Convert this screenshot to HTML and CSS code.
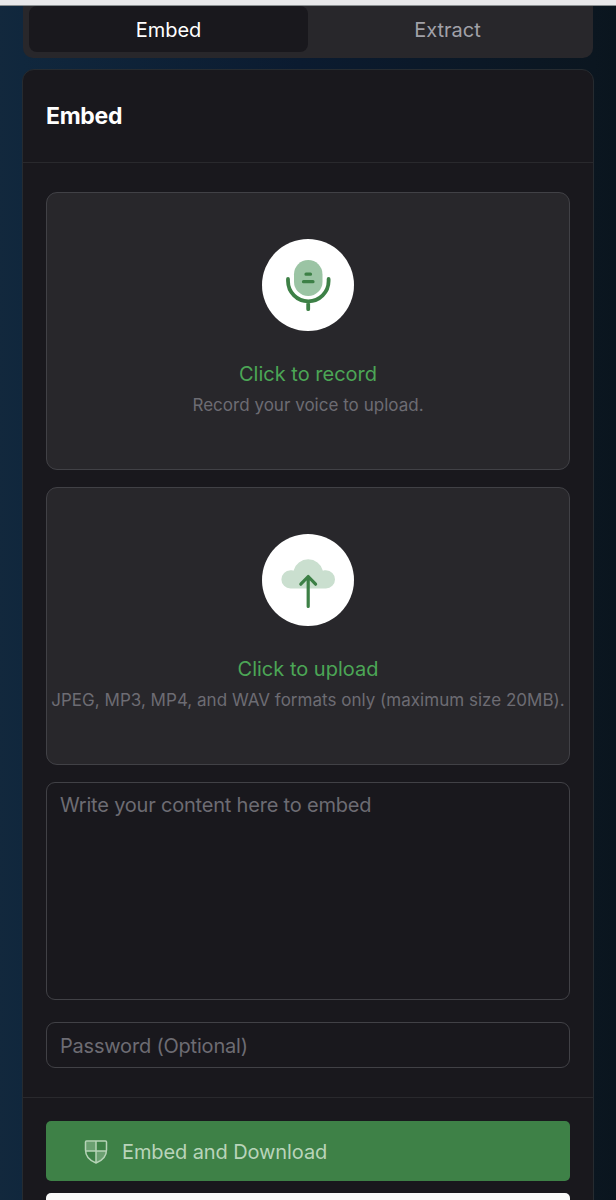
FILE: index.html
```
<!DOCTYPE html>
<html lang="en">
<head>
  <meta charset="UTF-8">
  <meta name="viewport" content="width=device-width, initial-scale=1.0">
  <title>Embed</title>
  <link rel="stylesheet" href="styles.css">
</head>
<body>
  <div class="topbar"></div>

  <div class="tabs">
    <button class="tab active">Embed</button>
    <button class="tab">Extract</button>
  </div>

  <main class="card">
    <header class="card-header"><h1>Embed</h1></header>

    <div class="card-body">
      <div class="drop">
        <div class="circle">
          <svg width="92" height="92" viewBox="0 0 92 92" fill="none" stroke="#3d8046" stroke-width="3.8" stroke-linecap="round">
            <rect x="32" y="21" width="28.500" height="36" rx="14.250" fill="#9bc4a4" stroke="none"/>
            <path d="M44 35.200h4.500M41.500 42.700h9.500" stroke-width="3.2"/>
            <path d="M26 40v2a20.300 20.300 0 0 0 40.600 0v-2M46.200 64v6.200"/>
          </svg>
        </div>
        <p class="drop-title">Click to record</p>
        <p class="drop-note">Record your voice to upload.</p>
      </div>

      <div class="drop">
        <div class="circle">
          <svg width="92" height="92" viewBox="0 0 92 92" fill="none">
            <path d="M28.500 54.500a9.100 9.100 0 0 1 0-18.200c1 0 2 .1 3 .4a15.200 15.200 0 0 1 29.400 0c1-.3 2-.4 3-.4a9.100 9.100 0 0 1 0 18.200z" fill="#cadfcf"/>
            <path d="M46.200 72.500V43M38.800 50.200l7.400-7.700 7.400 7.700" stroke="#3d8046" stroke-width="3.2" stroke-linecap="round" stroke-linejoin="round"/>
          </svg>
        </div>
        <p class="drop-title">Click to upload</p>
        <p class="drop-note">JPEG, MP3, MP4, and WAV formats only (maximum size 20MB).</p>
      </div>

      <textarea class="field content" placeholder="Write your content here to embed"></textarea>
      <input class="field password" type="password" placeholder="Password (Optional)">
    </div>

    <footer class="card-footer">
      <button class="btn btn-green">
        <svg width="24" height="26" viewBox="0 0 24 26" fill="none" stroke="#b6d3b7" stroke-width="1.500" stroke-linejoin="round">
          <path d="M2 2.500h10v9.500H1.500zM12 12h10.300c-.5 6-4.300 9.500-10.300 12z" fill="#6ba071" stroke="none"/>
          <path d="M2.500 2h19c.6 0 1 .4 1 1v8c0 6.500-4 10.500-10.500 13C5.500 21.500 1.500 17.500 1.500 11V3c0-.6.4-1 1-1zM12 2v22M1.500 12h21"/>
        </svg>
        <span>Embed and Download</span>
      </button>
      <button class="btn btn-white"></button>
    </footer>
  </main>
</body>
</html>
```
FILE: styles.css
```
* {
  box-sizing: border-box;
}
body {
  margin: 0;
  height: 1200px;
  overflow: hidden;
  font-family: Inter, sans-serif;
  font-size: 20px;
  color: #fff;
  background: linear-gradient(90deg, #12283d 0, #10273d 23px, #0b1b30 300px, #0b1620 594px, #0a151e 616px);
}
button, textarea, input {
  font: inherit;
  border: 0;
}
.topbar {
  height: 6px;
  background: #e8e8ea;
  border-bottom: 1px solid #8b9092;
}
.tabs {
  display: flex;
  height: 52px;
  margin: 0 23px;
  padding: 0 6px 6px;
  background: #28272b;
  border-radius: 0 0 10px 10px;
}
.tab {
  flex: 1;
  padding: 2px 0 0;
  color: #a1a1a8;
  background: none;
  border-radius: 8px;
}
.tab.active {
  color: #fff;
  background: #19181d;
}
.card {
  height: 1150px;
  margin: 11px 22px 0;
  background: #19181d;
  border: 1px solid #262b30;
  border-radius: 12px;
}
.card-header {
  height: 93px;
  padding: 0 23px;
  display: flex;
  align-items: center;
  border-bottom: 1px solid #29292d;
}
h1 {
  margin: 0 0 1px;
  font-size: 23px;
  font-weight: 700;
  line-height: 30px;
  letter-spacing: -0.3px;
}
.card-body {
  height: 935px;
  padding: 29px 23px 0;
  border-bottom: 1px solid #29292d;
}
.drop {
  height: 278px;
  margin-bottom: 17px;
  padding-top: 46px;
  text-align: center;
  background: #28272b;
  border: 1px solid #414146;
  border-radius: 11px;
}
.circle {
  width: 92px;
  height: 92px;
  margin: 0 auto 27px;
  background: #fff;
  border-radius: 50%;
}
.circle svg {
  display: block;
}
.drop-title {
  margin: 0;
  line-height: 32px;
  color: #4ca656;
}
.drop-note {
  margin: 0;
  font-size: 17px;
  line-height: 30px;
  letter-spacing: 0.02px;
  white-space: nowrap;
  color: #6d6c73;
}
.field {
  display: block;
  width: 100%;
  padding: 8px 13px;
  line-height: 28px;
  color: #fff;
  background: none;
  border: 1px solid #414146;
  border-radius: 9px;
  resize: none;
}
.field::placeholder {
  letter-spacing: -0.2px;
  color: #6d6c73;
}
.content {
  height: 218px;
  margin-bottom: 22px;
}
.password {
  height: 46px;
  padding: 9px 13px 7px;
}
.card-footer {
  padding: 23px 23px 0;
}
.btn {
  display: flex;
  align-items: center;
  width: 100%;
  height: 60px;
  padding: 2px 38px 0;
  border-radius: 5px;
}
.btn-green {
  gap: 14px;
  margin-bottom: 12px;
  letter-spacing: -0.1px;
  color: #b9d4ba;
  background: #3e8147;
}
.btn-white {
  background: #fafafa;
}
```
